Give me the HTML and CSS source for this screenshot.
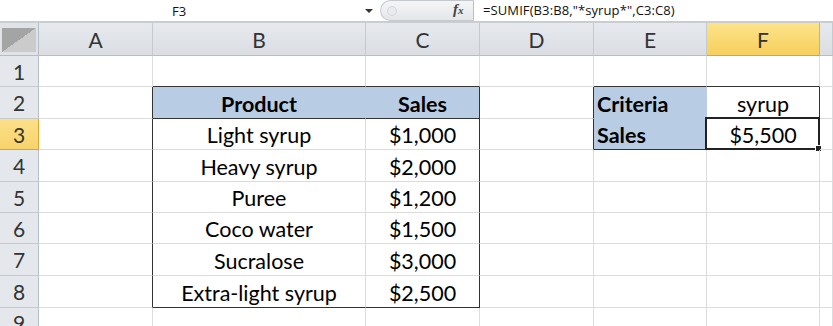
FILE: index.html
```html
<!DOCTYPE html>
<html>
<head>
  <meta charset="UTF-8">
  <title>SUMIF wildcard</title>
  <link rel="stylesheet" href="styles.css">
</head>
<body>

<div class="fbar">
  <div class="namebox">
    <span class="cellref">F3</span>
    <span class="drop"></span>
  </div>
  <div class="fxzone">
    <span class="knob"></span>
    <span class="fx"><i>f</i><i class="x">x</i></span>
  </div>
  <div class="formula">=SUMIF(B3:B8,"*syrup*",C3:C8)</div>
</div>

<div class="sheet">
  <!-- column headers -->
  <div class="corner"><span class="tri"></span></div>
  <div class="colh">A</div>
  <div class="colh">B</div>
  <div class="colh">C</div>
  <div class="colh">D</div>
  <div class="colh">E</div>
  <div class="colh sel">F</div>
  <div class="colh"></div>

  <!-- row 1 -->
  <div class="rowh">1</div>
  <div class="c"></div>
  <div class="c tb-top"></div>
  <div class="c tb-top"></div>
  <div class="c"></div>
  <div class="c tb-top"></div>
  <div class="c tb-top"></div>
  <div class="c"></div>

  <!-- row 2 -->
  <div class="rowh">2</div>
  <div class="c tb-left"></div>
  <div class="c blue head mid tb-bot">Product</div>
  <div class="c blue head mid tb-bot tb-right">Sales</div>
  <div class="c tb-left"></div>
  <div class="c blue head">Criteria</div>
  <div class="c mid tb-right">syrup</div>
  <div class="c"></div>

  <!-- row 3 -->
  <div class="rowh sel">3</div>
  <div class="c tb-left"></div>
  <div class="c mid">Light syrup</div>
  <div class="c mid tb-right">$1,000</div>
  <div class="c tb-left"></div>
  <div class="c blue head tb-bot">Sales</div>
  <div class="c mid tb-bot tb-right">$5,500<span class="selbox"><span class="handle"></span></span></div>
  <div class="c"></div>

  <!-- row 4 -->
  <div class="rowh">4</div>
  <div class="c tb-left"></div>
  <div class="c mid">Heavy syrup</div>
  <div class="c mid tb-right">$2,000</div>
  <div class="c"></div>
  <div class="c"></div>
  <div class="c"></div>
  <div class="c"></div>

  <!-- row 5 -->
  <div class="rowh">5</div>
  <div class="c tb-left"></div>
  <div class="c mid">Puree</div>
  <div class="c mid tb-right">$1,200</div>
  <div class="c"></div>
  <div class="c"></div>
  <div class="c"></div>
  <div class="c"></div>

  <!-- row 6 -->
  <div class="rowh">6</div>
  <div class="c tb-left"></div>
  <div class="c mid">Coco water</div>
  <div class="c mid tb-right">$1,500</div>
  <div class="c"></div>
  <div class="c"></div>
  <div class="c"></div>
  <div class="c"></div>

  <!-- row 7 -->
  <div class="rowh">7</div>
  <div class="c tb-left"></div>
  <div class="c mid">Sucralose</div>
  <div class="c mid tb-right">$3,000</div>
  <div class="c"></div>
  <div class="c"></div>
  <div class="c"></div>
  <div class="c"></div>

  <!-- row 8 -->
  <div class="rowh">8</div>
  <div class="c tb-left"></div>
  <div class="c mid tb-bot">Extra-light syrup</div>
  <div class="c mid tb-bot tb-right">$2,500</div>
  <div class="c"></div>
  <div class="c"></div>
  <div class="c"></div>
  <div class="c"></div>

  <!-- row 9 -->
  <div class="rowh">9</div>
  <div class="c"></div>
  <div class="c"></div>
  <div class="c"></div>
  <div class="c"></div>
  <div class="c"></div>
  <div class="c"></div>
  <div class="c"></div>
</div>

</body>
</html>
```

FILE: styles.css
```css
body {
  margin: 0;
  background: white;
  font-family: "Lato", "Open Sans", sans-serif;
  overflow: hidden;
}

/* formula bar */
.fbar {
  display: flex;
  height: 21px;
  border-bottom: 2px solid #c9cdd2;
  font-family: "Open Sans", "DejaVu Sans", sans-serif;
  font-size: 13px;
  color: #111;
}
.namebox {
  width: 380px;
  position: relative;
  display: flex;
  align-items: center;
}
.cellref {
  margin-left: 172px;
}
.drop {
  position: absolute;
  left: 365px;
  top: 9px;
  border-left: 4px solid transparent;
  border-right: 4px solid transparent;
  border-top: 4px solid #333;
}
.fxzone {
  width: 94px;
  position: relative;
  background: linear-gradient(#f4f5f7, #e4e7ea);
  border: 1px solid #c5c9ce;
  border-right: 1px solid #b9bec4;
  border-radius: 11px 0 0 11px;
  box-sizing: border-box;
}
.knob {
  position: absolute;
  left: 6px;
  top: 5px;
  width: 8px;
  height: 8px;
  border-radius: 50%;
  background: #e9ebee;
  border: 1px solid #d3d6da;
}
.fx {
  position: absolute;
  left: 72px;
  top: 0;
  font-family: "Liberation Serif", serif;
  font-size: 15px;
  font-weight: bold;
  color: #444;
}
.fx .x {
  font-size: 11px;
}
.formula {
  padding-left: 9px;
  line-height: 21px;
  font-size: 13px;
  letter-spacing: 0.1px;
}

/* grid */
.sheet {
  display: grid;
  grid-template-columns: 39px 114px 213px 114px 114px 113px 113px 1fr;
  grid-template-rows: 33px 31px 32px 31px 32px 31px 31px 32px 32px 30px;
  font-size: 21.5px;
}
.sheet > div {
  box-sizing: border-box;
}
.corner {
  background: #dfe3e8;
  border-right: 1px solid #b7bdc4;
  border-bottom: 1px solid #b7bdc4;
  position: relative;
  padding: 5px 2px 3px 2px;
}
.corner .tri {
  display: block;
  height: 100%;
  background: linear-gradient(to bottom right, #a4a4a4 50%, #cbcbcb 50%);
}
.colh {
  background: linear-gradient(#e6e9ed, #dadee3);
  border-right: 1px solid #c5cad0;
  border-bottom: 1px solid #b7bdc4;
  display: flex;
  align-items: center;
  justify-content: center;
  color: #333;
  font-size: 21px;
}
.colh.sel {
  background: linear-gradient(#fbe38c, #f7cf5c);
  border-right-color: #e2b04a;
  border-bottom-color: #e2a233;
}
.rowh {
  background: #e4e8ed;
  border-right: 1px solid #b7bdc4;
  border-bottom: 1px solid #c5cad0;
  display: flex;
  align-items: center;
  justify-content: center;
  color: #333;
  font-size: 21px;
}
.rowh.sel {
  background: linear-gradient(#fbe08a, #f8d36a);
  border-right-color: #e2a233;
  border-bottom-color: #e2a233;
}

/* cells */
.c {
  border-right: 1px solid #dadcdd;
  border-bottom: 1px solid #dadcdd;
  display: flex;
  align-items: flex-end;
  padding: 0 3px 1px 3px;
  color: #000;
  white-space: nowrap;
  position: relative;
}
.mid {
  justify-content: center;
}
.blue {
  background: #b8cce4;
  border-right-color: #b8cce4;
  border-bottom-color: #b8cce4;
}
.head {
  font-weight: bold;
}
.tb-top {
  border-bottom-color: #333;
}
.tb-bot {
  border-bottom-color: #333;
}
.tb-left {
  border-right-color: #333;
}
.tb-right {
  border-right-color: #333;
}

/* active cell */
.selbox {
  position: absolute;
  left: -2px;
  top: -2px;
  right: -1px;
  bottom: -1px;
  border: 2px solid #222;
}
.handle {
  position: absolute;
  right: -4px;
  bottom: -4px;
  width: 5px;
  height: 5px;
  background: #222;
  border: 1px solid white;
}
```
